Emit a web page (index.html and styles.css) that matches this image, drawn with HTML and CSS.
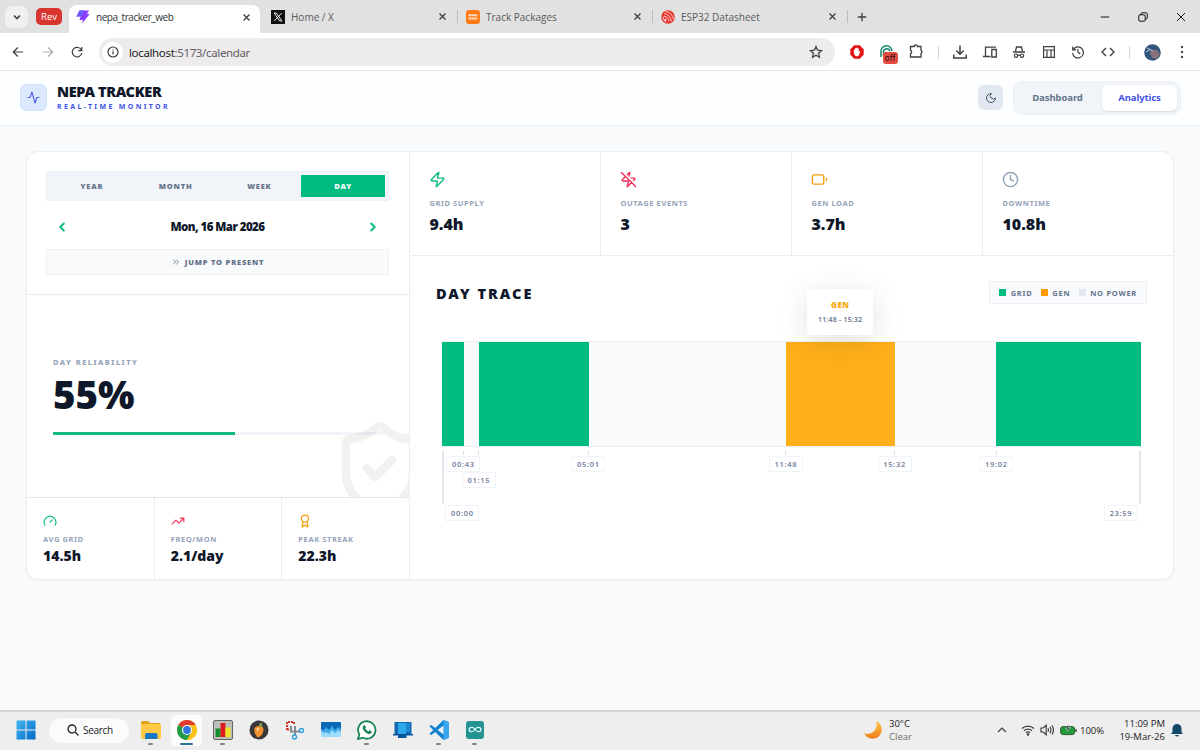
FILE: index.html
```html
<!DOCTYPE html>
<html lang="en">
<head>
  <meta charset="UTF-8">
  <meta name="viewport" content="width=device-width,initial-scale=1.0">
  <title>nepa_tracker_web</title>
  <link rel="stylesheet" href="styles.css">
</head>
<body>

<!-- Tab strip -->
<div class="tab-strip">
  <div class="tab-search"><svg class="line" width="10" height="10" viewBox="0 0 10 10"><path d="M2 3.5 5 6.5 8 3.5" stroke-width="1.6"/></svg></div>
  <div class="tab-group">Rev</div>
  <div class="tab active">
    <svg class="favicon" width="14" height="14" viewBox="0 0 14 14"><path d="M3.500.5H13L11 4h2.700L6 13.800 7 10H3.500l1.200-3.500H.5z" fill="#8b3dff"/><path d="M3.500.5h5L5.500 6.500h-5z" fill="#6b5cff"/></svg>
    <span class="tab-title">nepa_tracker_web</span>
    <svg class="close" width="9" height="9" viewBox="0 0 9 9"><path d="M1.500 1.500l6 6M7.500 1.500l-6 6"/></svg>
  </div>
  <div class="tab">
    <svg class="favicon" width="14" height="14" viewBox="0 0 14 14"><rect width="14" height="14" fill="#111"/><path d="M3 3h2.300L11 11H8.700zM10.700 3 3.300 11" fill="none" stroke="#fff" stroke-width=".9"/></svg>
    <span class="tab-title">Home / X</span>
    <svg class="close" width="9" height="9" viewBox="0 0 9 9"><path d="M1.500 1.500l6 6M7.500 1.500l-6 6"/></svg>
  </div>
  <div class="tab divided">
    <svg class="favicon" width="14" height="14" viewBox="0 0 14 14"><rect width="14" height="14" rx="3" fill="#ff7a14"/><path d="M2.500 5.300h9M2.500 8.500h9" stroke="#ffe7d3" stroke-width="1.900" stroke-dasharray="2.400 .4"/></svg>
    <span class="tab-title">Track Packages</span>
    <svg class="close" width="9" height="9" viewBox="0 0 9 9"><path d="M1.500 1.500l6 6M7.500 1.500l-6 6"/></svg>
  </div>
  <div class="tab divided">
    <svg class="favicon" width="14" height="14" viewBox="0 0 14 14"><circle cx="7" cy="7" r="6.800" fill="#e8362d"/><g fill="none" stroke="#ffd9d6" stroke-width=".9"><path d="M4.500 1.500a8.500 8.500 0 0 1 8 8M3 3.800a7.500 7.500 0 0 1 7.300 7.500M3 6.300a5 5 0 0 1 5 5.200M2 6.500a5.500 5.500 0 0 0 3 5.500"/></g><circle cx="4.500" cy="9.700" r="1" fill="#fff"/></svg>
    <span class="tab-title">ESP32 Datasheet</span>
    <svg class="close" width="9" height="9" viewBox="0 0 9 9"><path d="M1.500 1.500l6 6M7.500 1.500l-6 6"/></svg>
  </div>
  <div class="new-tab divided"><svg class="line" width="10" height="10" viewBox="0 0 10 10"><path d="M5 .8v8.400M.8 5h8.400" stroke-width="1.300"/></svg></div>
  <div class="window-buttons">
    <svg class="line" width="10" height="10" viewBox="0 0 10 10"><path d="M.8 5h8.400"/></svg>
    <svg class="line" width="10" height="10" viewBox="0 0 10 10"><rect x=".8" y="2.800" width="6.400" height="6.400" rx="1.200"/><path d="M3 2.500V2a1.200 1.200 0 0 1 1.200-1.200H8A1.300 1.300 0 0 1 9.300 2v3.700A1.300 1.300 0 0 1 8 7h-.6"/></svg>
    <svg class="line" width="10" height="10" viewBox="0 0 10 10"><path d="M1 1l8 8M9 1 1 9"/></svg>
  </div>
</div>

<!-- Browser toolbar -->
<div class="toolbar">
  <div class="nav-buttons">
    <svg class="line" width="12" height="12" viewBox="0 0 12 12"><path d="M11 6H1.500M5.800 1.500 1.300 6l4.500 4.500"/></svg>
    <svg class="line muted" width="12" height="12" viewBox="0 0 12 12"><path d="M1 6h9.500M6.200 1.500 10.700 6l-4.500 4.500"/></svg>
    <svg class="line" width="12" height="12" viewBox="0 0 12 12"><path d="M10.500 4.300A4.800 4.800 0 1 0 10.800 7M10.800 1v3.600H7.200"/></svg>
  </div>
  <div class="address">
    <div class="site-info"><svg class="line" width="12" height="12" viewBox="0 0 12 12"><circle cx="6" cy="6" r="5"/><path d="M6 5.300v3.200M6 3.300v1"/></svg></div>
    <span class="url"><b>localhost</b>:5173/calendar</span>
    <svg class="line star" width="14" height="14" viewBox="0 0 14 14"><path d="m7 1.500 1.600 3.700 4 .4-3 2.700.9 4L7 10.200l-3.500 2.100.9-4-3-2.700 4-.4z"/></svg>
  </div>
  <div class="extensions">
    <svg width="16" height="16" viewBox="0 0 16 16"><path d="M5.300 1.300h5.400l4 4v5.400l-4 4H5.300l-4-4V5.300z" fill="#e11313"/><path d="M4.800 8V6q.6-.8 1.200 0V4.500q.6-.8 1.200 0V4q.7-.8 1.300 0v.5q.7-.7 1.300.2V8l.7-.9q1-.3.7.6L9.800 11.500 8.500 12.300H7Q5 11 4.800 8z" fill="#fff"/></svg>
    <div class="ext-off">
      <svg width="16" height="16" viewBox="0 0 16 16" fill="none" stroke="#17866b" stroke-width="1.500"><path d="M2 13V7.500a5.500 5.500 0 0 1 11-.5M4.500 12V8a3.300 3.300 0 0 1 6.500-.7M7 11V8.500"/></svg>
      <span class="off-badge">off</span>
    </div>
    <svg class="line" width="16" height="16" viewBox="0 0 16 16"><path d="M2.500 2.500h3.700a1.600 1.600 0 0 1 3.200 0H13v3.800a1.600 1.600 0 0 1 0 3V13H2.500V9.800a2 2 0 0 0 0-3.600z" stroke-width="1.300"/></svg>
    <i class="rule"></i>
    <svg class="line" width="16" height="16" viewBox="0 0 16 16"><path d="M8 1.500V10M4.300 6.500 8 10.200l3.700-3.700M1.800 10.500V14h12.400v-3.500" stroke-width="1.500"/></svg>
    <svg class="line" width="16" height="16" viewBox="0 0 16 16"><path d="M14 3.200H3.500V12M1 12.500h7.500M9.800 5.500h4.500v7.500H9.800z" stroke-width="1.300"/></svg>
    <svg class="line" width="16" height="16" viewBox="0 0 16 16"><path d="M4.500 7 5.500 3h5l1 4M2 8h12M7 11.500q1-.8 2 0" stroke-width="1.300"/><circle cx="5" cy="11.700" r="1.700"/><circle cx="11" cy="11.700" r="1.700"/></svg>
    <svg class="line" width="16" height="16" viewBox="0 0 16 16"><path d="M2.600 2.600h10.800v10.800H2.600zM2.600 6h10.800M6 6v7.400M10 6v7.400" stroke-width="1.200"/></svg>
    <svg class="line" width="16" height="16" viewBox="0 0 16 16"><path d="M3.300 5.500A5.500 5.500 0 1 1 2.500 9M2.700 2.500v3.300H6M8 5v3.300l2.300 1.700"/></svg>
    <svg class="line" width="16" height="16" viewBox="0 0 16 16"><path d="M6 4 2 8l4 4M10 4l4 4-4 4" stroke-width="1.400"/></svg>
    <i class="rule"></i>
    <svg width="17" height="17" viewBox="0 0 17 17"><circle cx="8.500" cy="8.500" r="8.300" fill="#31557c"/><path d="M6 9q2-5 7-3l3 4-3 5-5-1z" fill="#87717c"/><path d="M3 4l6 3M2 8l5-3" stroke="#b9c7d5"/></svg>
    <svg width="16" height="16" viewBox="0 0 16 16" fill="#454749"><circle cx="8" cy="3" r="1.200"/><circle cx="8" cy="8" r="1.200"/><circle cx="8" cy="13" r="1.200"/></svg>
  </div>
</div>

<!-- App -->
<header class="app-header">
  <div class="logo"><svg class="ico" width="13" height="13" viewBox="0 0 24 24"><path d="M22 12h-2.480a2 2 0 0 0-1.930 1.460l-2.350 8.360a.25.25 0 0 1-.48 0L9.240 2.180a.25.25 0 0 0-.48 0l-2.350 8.360A2 2 0 0 1 4.490 12H2"/></svg></div>
  <div class="brand">
    <div class="brand-name">NEPA TRACKER</div>
    <div class="brand-sub">REAL-TIME MONITOR</div>
  </div>
  <div class="theme-toggle"><svg class="ico" width="12" height="12" viewBox="0 0 24 24"><path d="M12 3a6 6 0 0 0 9 9 9 9 0 1 1-9-9Z"/></svg></div>
  <nav class="app-nav">
    <span class="nav-link">Dashboard</span>
    <span class="nav-link current">Analytics</span>
  </nav>
</header>

<main class="page">
  <div class="panel">
    <section class="side">
      <div class="period">
        <div class="period-tabs">
          <span>YEAR</span><span>MONTH</span><span>WEEK</span><span class="on">DAY</span>
        </div>
        <div class="date-row">
          <svg class="ico bold" width="14" height="14" viewBox="0 0 24 24"><path d="m15 18-6-6 6-6"/></svg>
          <span class="date">Mon, 16 Mar 2026</span>
          <svg class="ico bold" width="14" height="14" viewBox="0 0 24 24"><path d="m9 18 6-6-6-6"/></svg>
        </div>
        <div class="jump">
          <svg class="ico" width="10" height="10" viewBox="0 0 24 24"><path d="m6 17 5-5-5-5M13 17l5-5-5-5"/></svg>
          <span>JUMP TO PRESENT</span>
        </div>
      </div>

      <div class="reliability">
        <div class="caption">DAY RELIABILITY</div>
        <div class="score">55%</div>
        <div class="meter"><div class="meter-fill" style="width: 55%"></div></div>
        <svg class="ico shield" width="101" height="101" viewBox="0 0 24 24"><path d="M20 13c0 5-3.500 7.500-7.660 8.950a1 1 0 0 1-.67-.01C7.500 20.500 4 18 4 13V6a1 1 0 0 1 1-1c2 0 4.500-1.200 6.240-2.720a1.170 1.170 0 0 1 1.520 0C14.510 3.810 17 5 19 5a1 1 0 0 1 1 1zM9 12l2 2 4-4"/></svg>
      </div>

      <div class="mini-stats">
        <div class="mini">
          <svg class="ico green" width="14" height="14" viewBox="0 0 24 24"><path d="m12 14 4-4M3.340 19a10 10 0 1 1 17.320 0"/></svg>
          <div class="label">AVG GRID</div>
          <div class="mini-value">14.5h</div>
        </div>
        <div class="mini">
          <svg class="ico red" width="14" height="14" viewBox="0 0 24 24"><path d="M16 7h6v6M22 7l-8.500 8.500-5-5L2 17"/></svg>
          <div class="label">FREQ/MON</div>
          <div class="mini-value">2.1/day</div>
        </div>
        <div class="mini">
          <svg class="ico amber" width="14" height="14" viewBox="0 0 24 24"><path d="m15.477 12.890 1.515 8.526a.5.5 0 0 1-.81.47l-3.580-2.687a1 1 0 0 0-1.197 0l-3.586 2.686a.5.5 0 0 1-.81-.469l1.514-8.526"/><circle cx="12" cy="8" r="6"/></svg>
          <div class="label">PEAK STREAK</div>
          <div class="mini-value">22.3h</div>
        </div>
      </div>
    </section>

    <section class="content">
      <div class="stats">
        <div class="stat">
          <svg class="ico green" width="17" height="17" viewBox="0 0 24 24"><path d="M4 14a1 1 0 0 1-.78-1.630l9.900-10.200a.5.5 0 0 1 .86.46l-1.920 6.020A1 1 0 0 0 13 10h7a1 1 0 0 1 .78 1.630l-9.900 10.200a.5.5 0 0 1-.86-.46l1.920-6.020A1 1 0 0 0 11 14z"/></svg>
          <div class="label">GRID SUPPLY</div>
          <div class="stat-value">9.4h</div>
        </div>
        <div class="stat">
          <svg class="ico red" width="17" height="17" viewBox="0 0 24 24"><path d="M10.513 4.856 13.120 2.170a.5.5 0 0 1 .86.46l-1.377 4.317M15.656 10H20a1 1 0 0 1 .78 1.630l-1.720 1.773M16.273 16.273 10.880 21.830a.5.5 0 0 1-.86-.46l1.920-6.020A1 1 0 0 0 11 14H4a1 1 0 0 1-.78-1.630l4.507-4.643M2 2l20 20"/></svg>
          <div class="label">OUTAGE EVENTS</div>
          <div class="stat-value">3</div>
        </div>
        <div class="stat">
          <svg class="ico amber" width="17" height="17" viewBox="0 0 24 24"><rect x="2" y="5.500" width="16" height="13" rx="2"/><path d="M22 10.500v3"/></svg>
          <div class="label">GEN LOAD</div>
          <div class="stat-value">3.7h</div>
        </div>
        <div class="stat">
          <svg class="ico slate" width="17" height="17" viewBox="0 0 24 24"><circle cx="12" cy="12" r="10"/><path d="M12 6v6l4 2"/></svg>
          <div class="label">DOWNTIME</div>
          <div class="stat-value">10.8h</div>
        </div>
      </div>

      <div class="trace">
        <div class="trace-head">
          <h2>DAY TRACE</h2>
          <div class="legend">
            <span><i class="swatch grid"></i>GRID</span>
            <span><i class="swatch gen"></i>GEN</span>
            <span><i class="swatch none"></i>NO POWER</span>
          </div>
        </div>
        <div class="timeline">
          <div class="track">
            <div class="seg grid" style="width: 3.04%"></div>
            <div class="seg" style="width: 2.17%"></div>
            <div class="seg grid" style="width: 15.74%"></div>
            <div class="seg" style="width: 28.22%"></div>
            <div class="seg gen" style="width: 15.57%">
              <div class="tooltip"><b>GEN</b><span>11:48 - 15:32</span></div>
            </div>
            <div class="seg" style="width: 14.54%"></div>
            <div class="seg grid" style="width: 20.72%"></div>
          </div>
          <div class="axis">
            <div class="tick" style="left: 2.99%"><span>00:43</span></div>
            <div class="tick low" style="left: 5.21%"><span>01:15</span></div>
            <div class="tick" style="left: 20.90%"><span>05:01</span></div>
            <div class="tick" style="left: 49.17%"><span>11:48</span></div>
            <div class="tick" style="left: 64.72%"><span>15:32</span></div>
            <div class="tick" style="left: 79.31%"><span>19:02</span></div>
            <div class="edges"><span>00:00</span><span>23:59</span></div>
          </div>
        </div>
      </div>
    </section>
  </div>
</main>

<!-- Windows taskbar -->
<footer class="taskbar">
  <div class="task-left">
    <svg class="start" width="20" height="20" viewBox="0 0 20 20"><defs><linearGradient id="win" x2="1" y2="1"><stop stop-color="#45b8f2"/><stop offset="1" stop-color="#0067c9"/></linearGradient></defs><path d="M.5.5h9v9h-9zM10.500.5h9v9h-9zM.5 10.500h9v9h-9zM10.500 10.500h9v9h-9z" fill="url(#win)"/></svg>
    <div class="search"><svg width="12" height="12" viewBox="0 0 12 12" fill="none" stroke="#222" stroke-width="1.300"><circle cx="5" cy="5" r="4"/><path d="m8 8 3.500 3.500"/></svg>Search</div>
    <div class="app running"><svg width="20" height="20" viewBox="0 0 20 20"><path d="M0 3q0-2 1.500-2H7l2 2h10v5H0z" fill="#e2a11c"/><rect y="4" width="20" height="15" rx="1.200" fill="#ffcb47"/><path d="M4 19v-4q0-2 2-2h8.500q2 0 2 2v4z" fill="#1976c4"/></svg></div>
    <div class="app running focus"><svg width="20" height="20" viewBox="0 0 20 20"><circle cx="10" cy="10" r="10" fill="#fbc116"/><path d="M10 10 1.340 5A10 10 0 0 1 18.660 5z" fill="#e33b2e"/><path d="M10 10 1.340 5A10 10 0 0 0 10 20l4.300-7.500z" fill="#229a4b"/><path d="M10 5h8.660A10 10 0 0 1 10 20l4.300-7.500z" fill="#fbc116"/><circle cx="10" cy="10" r="5" fill="#fff"/><circle cx="10" cy="10" r="3.900" fill="#2f72e0"/></svg></div>
    <div class="app running"><svg width="20" height="20" viewBox="0 0 20 20"><rect x=".5" y=".5" width="19" height="19" rx="1.500" fill="#bdbdba" stroke="#666"/><path d="M2.500 8.500h5V17h-5z" fill="#15912b"/><path d="M7.500 3h5v14h-5z" fill="#e01b1b"/><path d="M12.500 7.500h5V17h-5z" fill="#eee428"/></svg></div>
    <div class="app"><svg width="20" height="20" viewBox="0 0 20 20"><circle cx="10" cy="10" r="9.500" fill="#38373c"/><path d="M5.500 8q2-2.800 5.500-1.800 4 .5 3.500 4.300Q13.500 16.500 8.500 17.500 4.500 13 5.500 8z" fill="#f5912c"/><path d="M10 7q-.5-4 3-4.500Q12 5 14 6.500z" fill="#7fa650"/><path d="M7.500 9q1-1.500 3-1.300L8.500 12z" fill="#ffd9a0"/></svg></div>
    <div class="app"><svg width="20" height="20" viewBox="0 0 20 20" fill="none"><path d="M2 10V2h7v3M2 9.500h3" stroke="#d6362c" stroke-width="2" stroke-dasharray="2 1"/><path d="M6 6v5.500h9M10 6v9" stroke="#858b92" stroke-width="2"/><circle cx="16.500" cy="10.500" r="2" stroke="#2e9be0" stroke-width="1.300"/><circle cx="9.500" cy="17" r="2" stroke="#2e9be0" stroke-width="1.300"/></svg></div>
    <div class="app"><svg width="20" height="20" viewBox="0 0 20 20"><path d="M0 3q0-1 1-1h18q1 0 1 1v13q0 1-1 1H1q-1 0-1-1z" fill="#9bdcfa"/><path d="M0 7h20v5l-3-2-3 3-3-3-3 4-3-2-2 1-3-2z" fill="#3fa9e8"/><path d="M0 3q0-1 1-1h18q1 0 1 1v6l-3-2-3 3-3-4-3 4-3-3-2 3-3-1z" fill="#0968b8"/></svg></div>
    <div class="app running"><svg width="20" height="20" viewBox="0 0 20 20"><path d="M1 19 2.300 14.400A8.700 8.700 0 1 1 5.800 17.700z" fill="#fff" stroke="#178553" stroke-width="1.800"/><path d="M6.700 5.500q1-.9 1.600.2l.7 1.600-.8 1.200q1.200 2.200 3.200 3l1.100-1.200 2 1q.6.5-.2 1.700-1.500 1.600-4 .4-3-1.300-4.500-4.400-.7-2 .9-3.500z" fill="#178553"/></svg></div>
    <div class="app"><svg width="20" height="20" viewBox="0 0 20 20"><path d="M1.500 2h17v12h-17z" fill="#1268ae"/><path d="M5 3h8v11H5z" fill="#2ea9ea"/><path d="M13 3h4v9h-4z" fill="#1f88d2"/><path d="M0 14h20v1.500H0zM5 15.500h8.500V18H5z" fill="#07569c"/></svg></div>
    <div class="app running"><svg width="20" height="20" viewBox="0 0 20 20"><path d="M14.500 0 20 2.300v15.400L14.500 20l-8.300-8L2.300 15 .3 14 4.200 10 .3 6l2-1 3.900 3z" fill="#1283d2"/><path d="M14.500 0 20 2.300v15.400L14.500 20z" fill="#38a7ee"/><path d="M14.500 5.500v9L8.700 10z" fill="#efefef"/></svg></div>
    <div class="app running"><svg width="20" height="20" viewBox="0 0 20 20"><rect x="1" y="1" width="18" height="18" rx="3" fill="#249493"/><path d="M10 9.500q-2-2.500-3.700-2.200a2.200 2.200 0 0 0 0 4.400Q8 12 10 9.500t3.700-2.200a2.200 2.200 0 0 1 0 4.400Q12 12 10 9.500z" fill="none" stroke="#e9ffff" stroke-width="1.200"/></svg></div>
  </div>
  <div class="weather">
    <svg width="18" height="18" viewBox="0 0 18 18"><defs><linearGradient id="moon" x2="0" y2="1"><stop stop-color="#fcc743"/><stop offset="1" stop-color="#ef7c1b"/></linearGradient></defs><path d="M12 0A9.200 9.200 0 1 1 .2 12.300 9.300 9.300 0 0 0 12 0z" fill="url(#moon)"/></svg>
    <div>30°C<br><span>Clear</span></div>
  </div>
  <div class="tray">
    <svg class="line" width="10" height="10" viewBox="0 0 10 10"><path d="m1 7 4-4 4 4"/></svg>
    <svg class="line wifi" width="14" height="12" viewBox="0 0 14 12"><path d="M1 4.500a8.700 8.700 0 0 1 12 0M3 6.700a5.800 5.800 0 0 1 8 0M5 8.800a2.900 2.900 0 0 1 4 0"/><circle cx="7" cy="10.500" r=".7"/></svg>
    <svg class="line" width="14" height="12" viewBox="0 0 14 12"><path d="M1 4v4h2.200l3 2.800V1.200L3.200 4zM8 4.200q1 1.800 0 3.600M10 2.700q2 3.300 0 6.600M12 1.500q3 4.500 0 9"/></svg>
    <svg class="battery" width="17" height="12" viewBox="0 0 17 12"><rect x=".6" y="2.600" width="14" height="8" rx="2.500" fill="#219a37" stroke="#2c5a34"/><path d="M16 5v3" stroke="#333" stroke-width="1.300"/><path d="M8.500 0 5.500 4.500h2L7 7.500 10.300 3.500H8z" fill="#222" stroke="#eee" stroke-width=".5"/></svg>
    <span class="percent">100%</span>
    <div class="clock">11:09 PM<br>19-Mar-26</div>
    <svg class="bell" width="12" height="14" viewBox="0 0 12 14"><path d="M1.500 9V5.500a4.500 4.500 0 0 1 9 0V9L12 11H0zM4 12h4q-.5 1.600-2 1.600T4 12z" fill="#134a68"/></svg>
  </div>
</footer>

</body>
</html>
```
FILE: styles.css
```css
* {
  box-sizing: border-box;
}
body {
  margin: 0;
  width: 1200px;
  height: 750px;
  overflow: hidden;
  display: flex;
  flex-direction: column;
  background: #f8fafc;
  font-family: "Noto Sans", "Open Sans", sans-serif;
  color: #0f172a;
}
svg {
  display: block;
  flex: none;
}
.line {
  fill: none;
  stroke: #3c3f42;
  stroke-width: 1.2;
}
.line.muted {
  stroke: #aaa;
}
.ico {
  fill: none;
  stroke: currentColor;
  stroke-width: 2;
  stroke-linecap: round;
  stroke-linejoin: round;
}
.green { color: #10b981; }
.red { color: #f0325a; }
.amber { color: #f59e0b; }
.slate { color: #94a3b8; }

/* tab strip */
.tab-strip {
  height: 33px;
  flex: none;
  display: flex;
  align-items: center;
  padding-left: 5px;
  background: #e1e1e1;
  font-family: "Open Sans", sans-serif;
}
.tab-search {
  width: 23px;
  height: 22px;
  border-radius: 7px;
  background: #f0f0f0;
  display: flex;
  align-items: center;
  justify-content: center;
}
.tab-group {
  width: 26px;
  height: 17px;
  margin: 0 7px 0 8px;
  border-radius: 5px;
  background: #d93630;
  color: #fff;
  font-size: 9.5px;
  line-height: 17px;
  text-align: center;
}
.tab {
  width: 195px;
  height: 28px;
  display: flex;
  align-items: center;
  padding: 0 6px 0 13px;
  font-size: 10px;
  color: #5a5a5a;
}
.tab.active {
  width: 191px;
  margin-top: 5px;
  padding: 0 9px 4px 7px;
  margin-right: -2px;
  border-radius: 8px 8px 0 0;
  background: #fff;
  color: #333;
}
.tab-title {
  flex: 1;
  margin-left: 6px;
  white-space: nowrap;
}
.active .tab-title {
  letter-spacing: -.5px;
  font-size: 10px;
  letter-spacing: -.45px;
}
.close {
  fill: none;
  stroke: #3c3f42;
  stroke-width: 1.3;
}
.divided {
  background: linear-gradient(#bdbdbd, #bdbdbd) 4px 50% / 1px 13px no-repeat;
}
.new-tab {
  padding: 8px 14px;
}
.window-buttons {
  margin-left: auto;
  padding-right: 14px;
  display: flex;
  gap: 28px;
}
.window-buttons .line {
  stroke: #111;
  stroke-width: 1;
}

/* toolbar */
.toolbar {
  height: 38px;
  flex: none;
  display: flex;
  align-items: center;
  padding: 1px 10px 0 12px;
  background: #fff;
  border-bottom: 1px solid #e6e6e7;
}
.nav-buttons {
  display: flex;
  gap: 17.5px;
  width: 87px;
}
.address {
  width: 736px;
  height: 28px;
  border-radius: 14px;
  background: #edebec;
  display: flex;
  align-items: center;
  padding: 0 12px 0 3px;
}
.site-info {
  width: 21px;
  height: 21px;
  border-radius: 50%;
  background: #fff;
  display: flex;
  align-items: center;
  justify-content: center;
}
.url {
  flex: 1;
  margin-left: 6px;
  font-size: 11.5px;
  letter-spacing: -.35px;
  color: #5f6063;
}
.url b {
  font-weight: 400;
  color: #222;
}
.extensions {
  flex: 1;
  margin-left: 14px;
  display: flex;
  align-items: center;
  justify-content: space-between;
}
.ext-off {
  position: relative;
}
.off-badge {
  position: absolute;
  left: 4px;
  top: 8px;
  width: 15px;
  height: 12px;
  border-radius: 3px;
  background: #e54a41;
  color: #1b0b0a;
  font: 8px/12px "Noto Sans", sans-serif;
  text-align: center;
}
.rule {
  width: 1px;
  height: 13px;
  background: #d6d6d6;
}

/* app header */
.app-header {
  height: 55px;
  flex: none;
  display: flex;
  align-items: center;
  padding: 0 19px 1px 20px;
  background: #fdfeff;
  border-bottom: 1px solid #e9eef4;
}
.logo {
  width: 27px;
  height: 27px;
  border-radius: 6px;
  background: #dbe9fe;
  border: 1px solid #d0e1fb;
  color: #4759e4;
  display: flex;
  align-items: center;
  justify-content: center;
}
.brand {
  flex: 1;
  margin: -1px 0 0 10px;
}
.brand-name {
  font-size: 14.5px;
  line-height: 15px;
  font-weight: 900;
  letter-spacing: -.35px;
  white-space: nowrap;
}
.brand-sub {
  margin-top: 4px;
  font-size: 7px;
  line-height: 8px;
  font-weight: 700;
  letter-spacing: 2.35px;
  color: #4353e6;
}
.theme-toggle {
  width: 25px;
  height: 25px;
  margin-right: 10px;
  border-radius: 6px;
  background: #e2e8f0;
  color: #475569;
  display: flex;
  align-items: center;
  justify-content: center;
}
.app-nav {
  width: 168px;
  height: 34px;
  padding: 3px;
  display: flex;
  border-radius: 9px;
  background: #f1f5f9;
  border: 1px solid #edf1f6;
  font-size: 9.5px;
  font-weight: 700;
  letter-spacing: -.08px;
  line-height: 26px;
}
.nav-link {
  flex: 1;
  padding-right: 4px;
  text-align: center;
  color: #64748b;
}
.nav-link.current {
  flex: none;
  width: 75px;
  padding: 0;
  border-radius: 6px;
  background: #fff;
  color: #4353e6;
  box-shadow: 0 1px 2px rgba(15, 23, 42, .12);
}

/* analytics panel */
.page {
  flex: 1;
  padding: 25px 26px 0 26px;
}
.panel {
  width: 1148px;
  height: 429px;
  display: flex;
  border: 1px solid #eaeff4;
  border-radius: 12px;
  background: #fff;
  overflow: hidden;
  box-shadow: 0 1px 2px rgba(15, 23, 42, .03);
}
.side {
  width: 383px;
  flex: none;
  display: flex;
  flex-direction: column;
  border-right: 1px solid #e9eef4;
}
.period {
  height: 143px;
  padding: 19px 20px 0 19px;
  border-bottom: 1px solid #e6ebf2;
}
.period-tabs {
  height: 30px;
  padding: 3px;
  display: flex;
  background: #f1f5f9;
  border: 1px solid #edf1f6;
  font-size: 7.5px;
  font-weight: 900;
  letter-spacing: .8px;
  line-height: 22px;
  color: #64748b;
}
.period-tabs span {
  flex: 1;
  text-align: center;
}
.period-tabs .on {
  background: #00bb7f;
  color: #fff;
}
.date-row {
  height: 48px;
  padding: 3px 9px 0;
  display: flex;
  align-items: center;
  justify-content: space-between;
  color: #10b981;
}
.bold {
  stroke-width: 3.5;
}
.date {
  font-size: 11.5px;
  font-weight: 900;
  letter-spacing: -.55px;
  color: #0f172a;
}
.jump {
  height: 26px;
  padding-bottom: 1px;
  display: flex;
  align-items: center;
  justify-content: center;
  gap: 4px;
  background: #f8fafc;
  border: 1px solid #edf1f5;
  font-size: 7.5px;
  font-weight: 900;
  letter-spacing: .8px;
  color: #64748b;
}
.reliability {
  position: relative;
  height: 203px;
  padding: 61px 26px 0;
  overflow: hidden;
  border-bottom: 1px solid #e2e8f0;
}
.caption {
  font-size: 7.5px;
  line-height: 12px;
  font-weight: 800;
  letter-spacing: 1.45px;
  color: #94a3b8;
}
.score {
  margin-top: 6px;
  font-size: 38.5px;
  line-height: 40px;
  font-weight: 900;
}
.meter {
  margin-top: 18px;
  height: 3px;
  background: #f1f5f9;
}
.meter-fill {
  height: 3px;
  background: #10b981;
}
.shield {
  position: absolute;
  right: -21px;
  bottom: -22px;
  color: #000;
  opacity: .05;
}
.mini-stats {
  flex: 1;
  display: flex;
}
.mini {
  flex: 1;
  padding: 16px 0 0 16px;
}
.mini + .mini,
.stat + .stat {
  border-left: 1px solid #e9eef3;
}
.label {
  font-size: 7.5px;
  line-height: 10px;
  font-weight: 700;
  letter-spacing: .6px;
  color: #94a3b8;
}
.mini .label {
  margin-top: 6px;
}
.mini-value {
  margin-top: 4px;
  font-size: 14px;
  line-height: 16px;
  font-weight: 900;
}
.content {
  flex: 1;
  display: flex;
  flex-direction: column;
}
.stats {
  height: 104px;
  display: flex;
  border-bottom: 1px solid #e9eef4;
}
.stat {
  flex: 1;
  padding: 19px 0 0 19.4px;
}
.stat .label {
  margin-top: 10px;
}
.stat-value {
  margin-top: 6px;
  font-size: 16px;
  line-height: 20px;
  font-weight: 900;
}
.trace {
  padding: 25px 26px 0;
}
.trace-head {
  display: flex;
  justify-content: space-between;
}
h2 {
  margin: 0;
  font-size: 14.5px;
  line-height: 24px;
  font-weight: 900;
  letter-spacing: 2px;
}
.legend {
  height: 23px;
  padding: 0 9px;
  display: flex;
  align-items: center;
  gap: 8.5px;
  background: #f8fafc;
  border: 1px solid #edf1f5;
  font-size: 7.5px;
  font-weight: 700;
  letter-spacing: .73px;
  color: #64748b;
}
.legend span {
  display: flex;
  align-items: center;
  gap: 4.5px;
}
.swatch {
  width: 7px;
  height: 7px;
}
.grid { background: #00bb7f; }
.gen { background: #ffaf1a; }
.swatch.gen { background: #fc9a07; }
.none { background: #e2e8f0; }
.timeline {
  margin: 37px 6px 0 6.4px;
}
.track {
  height: 105px;
  display: flex;
  background: #f8fafc;
  border-bottom: 1px solid #e9eef3;
  box-shadow: 0 -1px 1px #eff1f4;
}
.seg {
  height: 104px;
}
.seg.gen {
  position: relative;
}
.tooltip {
  position: absolute;
  left: 50%;
  bottom: 111px;
  width: 66px;
  height: 46px;
  margin-left: -33px;
  padding-top: 11px;
  border-radius: 3px;
  background: #fff;
  box-shadow: 0 6px 30px rgba(0, 0, 0, .12);
  text-align: center;
  line-height: 9px;
}
.tooltip b {
  display: block;
  margin-bottom: 6px;
  font-size: 8px;
  font-weight: 900;
  letter-spacing: .5px;
  color: #f9a90f;
}
.tooltip span {
  display: block;
  font-size: 6.8px;
  font-weight: 600;
  letter-spacing: .3px;
  color: #64748b;
}

/* time axis, labels are pinned to their minute of the day */
.axis {
  position: relative;
  height: 75px;
  margin-top: 4px;
}
.tick {
  position: absolute;
  top: 0;
  width: 34px;
  margin-left: -17px;
  padding-top: 5px;
  background: linear-gradient(#d5dce6, #d5dce6) 50% 0 / 1px 4px no-repeat;
}
.tick.low {
  padding-top: 21px;
}
.axis span {
  display: block;
  width: 34px;
  height: 16px;
  background: #fff;
  border: 1px solid #f0f3f7;
  font-size: 7.5px;
  font-weight: 600;
  line-height: 14px;
  letter-spacing: .7px;
  text-align: center;
  color: #7483a0;
}
.edges {
  display: flex;
  justify-content: space-between;
  padding: 54px 3px 0;
  background:
    linear-gradient(#e2e5ec, #e2e5ec) 0 0 / 2px 53px no-repeat,
    linear-gradient(#e2e5ec, #e2e5ec) 100% 0 / 2px 53px no-repeat;
}

/* taskbar */
.taskbar {
  height: 40px;
  flex: none;
  display: flex;
  align-items: center;
  padding-bottom: 2px;
  border-top: 2px solid #d3d5d7;
  background: #eeeeee;
  font-family: "Open Sans", sans-serif;
  font-size: 9.5px;
  line-height: 13px;
  color: #222;
}
.task-left {
  width: 864px;
  padding-left: 16px;
  display: flex;
  align-items: center;
}
.search {
  width: 80px;
  height: 25px;
  margin: 0 6px 0 13px;
  border-radius: 13px;
  background: #fbfbfb;
  display: flex;
  align-items: center;
  gap: 4px;
  padding-left: 18px;
  font-size: 10px;
  letter-spacing: -.3px;
}
.app {
  width: 31px;
  height: 31px;
  margin-right: 5px;
  padding-top: 5px;
  display: flex;
  flex-direction: column;
  align-items: center;
}
.app.focus {
  border-radius: 4px;
  background: #fbfbfb;
}
.app.running::after {
  content: "";
  width: 5px;
  height: 2px;
  margin-top: 3px;
  border-radius: 1px;
  background: #858585;
}
.app.focus::after {
  width: 13px;
  background: #2b7396;
}
.weather {
  width: 133px;
  display: flex;
  align-items: center;
  gap: 7px;
}
.weather span {
  color: #707070;
}
.tray {
  flex: 1;
  display: flex;
  align-items: center;
  padding-right: 17px;
}
.wifi {
  margin: 0 5px 0 14px;
}
.battery {
  margin: 0 3px 0 6px;
}
.clock {
  margin-left: auto;
  margin-right: 6px;
  text-align: right;
}
```
